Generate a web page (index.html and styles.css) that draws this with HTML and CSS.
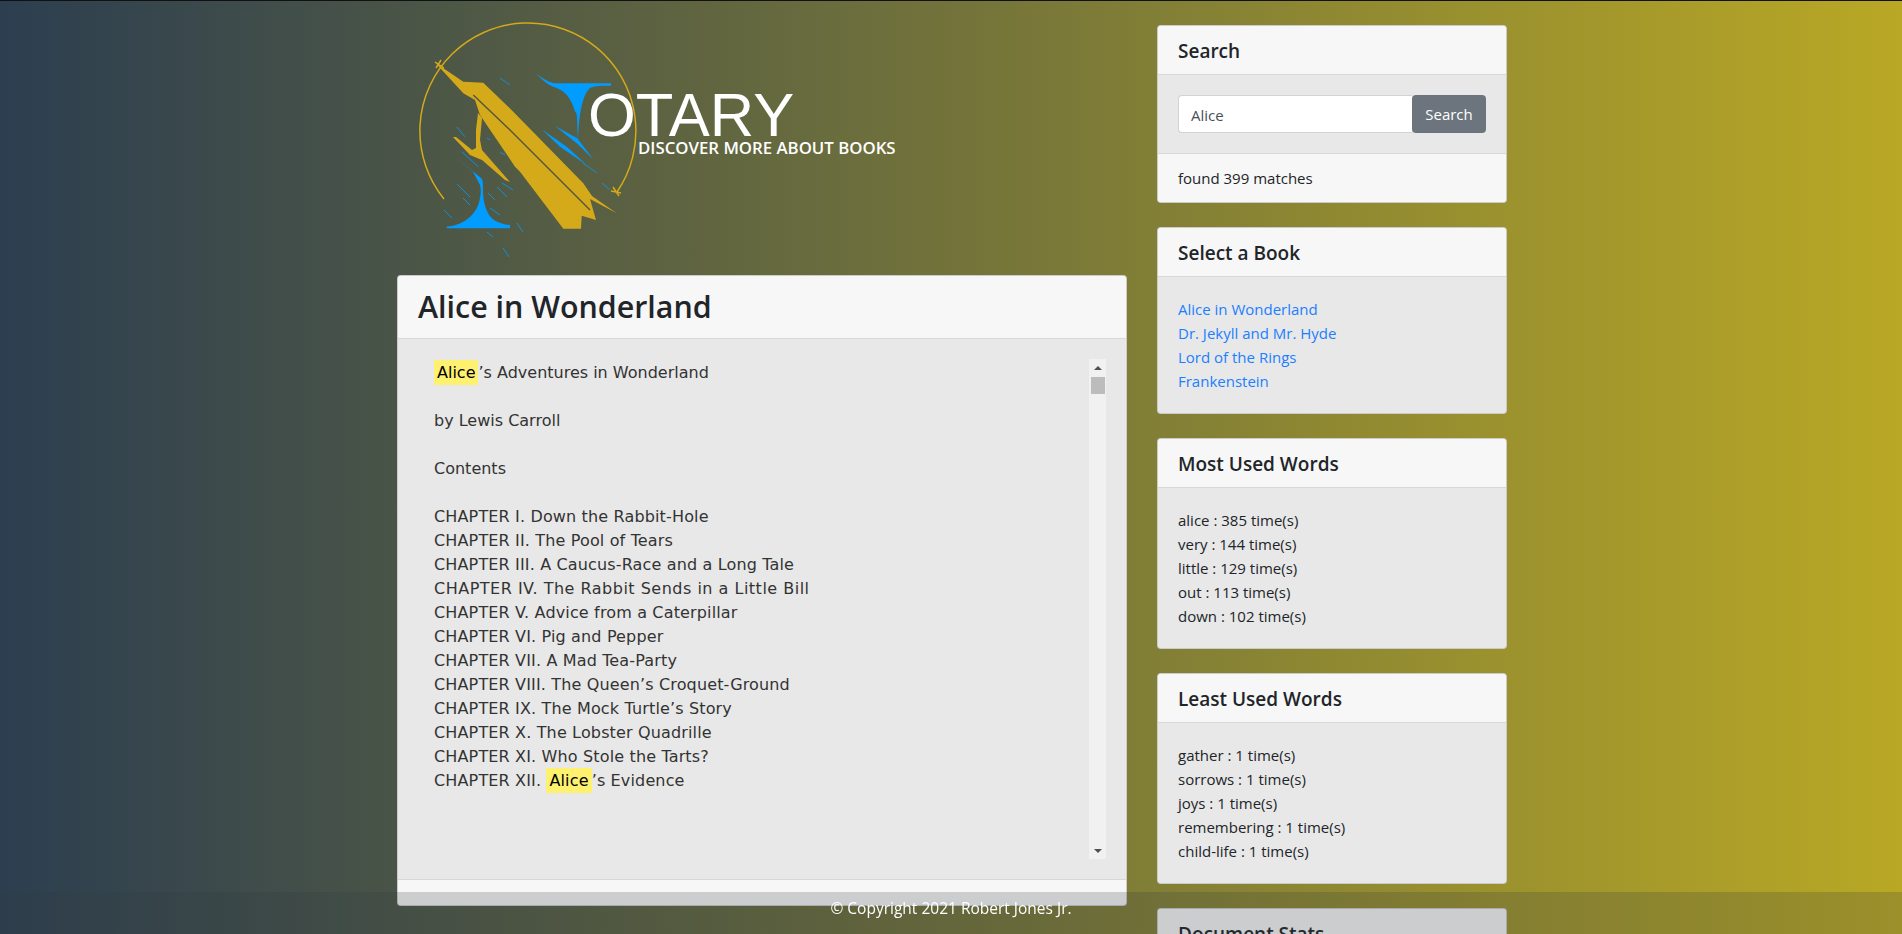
FILE: index.html
```html
<!DOCTYPE html>
<html lang="en">
  <head>
    <meta charset="UTF-8" />
    <meta name="viewport" content="width=device-width, initial-scale=1.0" />
    <title>Notary</title>
    <link rel="stylesheet" href="styles.css">
  </head>
  <body>
    <div class="top-line"></div>
    <div class="container">
      <div class="main-col">
        <header class="brand">
          <svg class="logo" width="240" height="250" viewBox="410 15 240 250">
            <!-- ring, open at the lower left -->
            <path class="ring" d="M444 199 A108 108 0 1 1 617 192" />
            <path class="ring" d="M611 191 L621 193 M613 187 L619 196 M435 62 L444 68 M436 68 L441 60" />
            <!-- the N: long gold diagonal -->
            <path class="gold" d="M435.3 62.7 L463.3 81.7 L483.3 82.7 L513.3 111.7 L583.3 183.3 L592 196 L616.7 213.3 L590 199 L596 220 L581.7 215.7 L581 228.7 L563.3 228.7 L520 171.7 L515 166.7 L480 115 L475 100 L463.3 93.3 Z" />
            <path class="slit" d="M473.3 95 L510 130 L590 210" />
            <path class="gold" d="M478 113 L482 118 L480 140 L482 150 L510 182 L505 180 L482 160 L477 158 L470 155 L453 137 L456 137 L472 150 L476 148 L476 130 Z" />
            <!-- blue serifs of the N -->
            <path class="blue" d="M535 73.3 C542 78 547 81 553.3 83.3 L611 83.3 L611 85.7 C600 85.5 594 86 590 88 C583 94 579 112 578 140 C577 125 578 112 575 111.7 C573 104 570 99 566.7 95 C562 90 558 88 553 86.7 C546 84 541 78 535 73.3 Z" />
            <path class="blue" d="M555 126 L577.3 138.3 L593.3 159.3 L576.7 143.3 Z" />
            <path class="blue" d="M541.7 129.3 L566.7 146.7 L586.7 165 L560 146.7 Z" />
            <path class="blue" d="M446.7 228.3 L446.7 226.5 C456 226 463 223 470 217 C476 211 479 205 480 198 C481 193 481 189 480 185 L473 171.7 L453 155 L481 178 C483 180 483 183 483 190 C483 197 484 205 488 213 C491 219 498 224 510 225 L510 228.3 Z" />
            <!-- specks -->
            <path class="speck" d="M500 78 L510 85 M456.7 127 L465 136.7 M461.7 151.7 L478.3 166.7 M457 184 L470 197 M488 193 L495 200 M497 187 L507 197 M502 183 L513 190 M490 208 L500 215 M444 210 L452 218 M487 232 L493 237 M517 223 L523 232 M503 248 L509 257 M500 152 L505 155 M487 138 L490 140 M583 163 L597 173 M602 183 L610 190 M463 198 L470 205" />
          </svg>
          <div class="brand-text">
            <div class="brand-name">OTARY</div>
            <div class="brand-tag">DISCOVER MORE ABOUT BOOKS</div>
          </div>
        </header>

        <section class="card book">
          <h2 class="card-header book-title">Alice in Wonderland</h2>
          <div class="book-body">
            <pre class="book-text"><mark>Alice</mark>’s Adventures in Wonderland

by Lewis Carroll

Contents

<span class="toc">CHAPTER I. Down the Rabbit-Hole
CHAPTER II. The Pool of Tears
CHAPTER III. A Caucus-Race and a Long Tale
<span class="toc-wide">CHAPTER IV. The Rabbit Sends in a Little Bill</span>
CHAPTER V. Advice from a Caterpillar
CHAPTER VI. Pig and Pepper
CHAPTER VII. A Mad Tea-Party
CHAPTER VIII. The Queen’s Croquet-Ground
CHAPTER IX. The Mock Turtle’s Story
CHAPTER X. The Lobster Quadrille
CHAPTER XI. Who Stole the Tarts?
CHAPTER XII. <mark>Alice</mark>’s Evidence</span></pre>
            <div class="scrollbar">
              <div class="sb-btn sb-up"></div>
              <div class="sb-thumb"></div>
              <div class="sb-btn sb-down"></div>
            </div>
          </div>
          <div class="card-footer book-foot"></div>
        </section>
      </div>

      <aside class="side-col">
        <section class="card">
          <h5 class="card-header">Search</h5>
          <div class="card-body search-body">
            <form class="search-form">
              <input class="search-input" type="text" value="Alice" />
              <button class="search-btn" type="button">Search</button>
            </form>
          </div>
          <div class="card-footer">found 399 matches</div>
        </section>

        <section class="card">
          <h5 class="card-header">Select a Book</h5>
          <div class="card-body">
            <a href="#">Alice in Wonderland</a>
            <a href="#">Dr. Jekyll and Mr. Hyde</a>
            <a href="#">Lord of the Rings</a>
            <a href="#">Frankenstein</a>
          </div>
        </section>

        <section class="card">
          <h5 class="card-header">Most Used Words</h5>
          <div class="card-body">
            <div>alice : 385 time(s)</div>
            <div>very : 144 time(s)</div>
            <div>little : 129 time(s)</div>
            <div>out : 113 time(s)</div>
            <div>down : 102 time(s)</div>
          </div>
        </section>

        <section class="card">
          <h5 class="card-header">Least Used Words</h5>
          <div class="card-body">
            <div>gather : 1 time(s)</div>
            <div>sorrows : 1 time(s)</div>
            <div>joys : 1 time(s)</div>
            <div>remembering : 1 time(s)</div>
            <div>child-life : 1 time(s)</div>
          </div>
        </section>

        <section class="card">
          <h5 class="card-header">Document Stats</h5>
          <div class="card-body">
            <div>Words : 27333</div>
          </div>
        </section>
      </aside>
    </div>

    <footer class="page-foot">© Copyright 2021 Robert Jones Jr.</footer>
  </body>
</html>
```

FILE: styles.css
```css
* {
  box-sizing: border-box;
}

html,
body {
  height: 100%;
}

body {
  margin: 0;
  overflow: hidden;
  font-family: "Open Sans", "Noto Sans", sans-serif;
  font-size: 15px;
  line-height: 24px;
  color: #212529;
  background: linear-gradient(to right, #2c3e50, #b9a825);
}

.top-line {
  height: 1px;
  background: #111;
}

.container {
  width: 1140px;
  margin: 0 auto;
  display: flex;
  gap: 30px;
  padding: 0 14px 0 16px;
}

.main-col {
  width: 730px;
}

.side-col {
  width: 350px;
  padding-top: 24px;
  display: flex;
  flex-direction: column;
  gap: 24px;
}

/* brand */
.brand {
  height: 274px;
  position: relative;
}

.logo {
  position: absolute;
  left: 13px;
  top: 14px;
}

.logo .ring {
  fill: none;
  stroke: #d4a91a;
  stroke-width: 1.5;
}

.logo .gold {
  fill: #d4a91a;
}

.logo .slit {
  fill: none;
  stroke: #55593f;
  stroke-width: 1.5;
}

.logo .blue {
  fill: #009cff;
}

.logo .speck {
  fill: none;
  stroke: #009cff;
  stroke-width: 1;
  opacity: 0.8;
}

.brand-text {
  position: absolute;
  left: 191px;
  top: 90px;
  color: #fff;
}

.brand-name {
  font-family: "Liberation Sans", Arial, sans-serif;
  font-size: 61.5px;
  line-height: 47px;
}

.brand-tag {
  margin-left: 50px;
  font-family: "Open Sans", sans-serif;
  font-size: 16.8px;
  font-weight: 600;
  line-height: 20px;
  white-space: nowrap;
}

/* cards */
.card {
  background: #e8e8e8;
  border: 1px solid rgba(0, 0, 0, 0.125);
  border-radius: 4px;
  overflow: hidden;
}

.card-header {
  margin: 0;
  padding: 13px 20px 11px;
  background: #f7f7f7;
  border-bottom: 1px solid rgba(0, 0, 0, 0.125);
  font-size: 19px;
  font-weight: 600;
  line-height: 24px;
}

.card-body {
  padding: 20px;
}

.card-body a {
  display: block;
  color: #1b7fff;
  text-decoration: none;
}

.card-footer {
  padding: 12px 20px;
  background: #f7f7f7;
  border-top: 1px solid rgba(0, 0, 0, 0.125);
}

/* search */
.search-form {
  display: flex;
}

.search-input {
  flex: 1;
  min-width: 0;
  height: 38px;
  padding: 7px 12px 5px;
  border: 1px solid #ced4da;
  border-right: 0;
  border-radius: 4px 0 0 4px;
  font: inherit;
  color: #495057;
  background: #fff;
}

.search-btn {
  width: 74px;
  height: 38px;
  padding: 6px 0;
  border: 0;
  border-radius: 4px;
  font: inherit;
  color: #fff;
  background: #6c757d;
}

/* book */
.book-title {
  padding: 12px 20px;
  font-size: 30.4px;
  line-height: 38px;
}

.book-body {
  display: flex;
  padding: 20px;
}

.book-text {
  flex: 1;
  height: 500px;
  margin: 0;
  padding: 2px 0 0 16px;
  overflow: hidden;
  font-family: "DejaVu Sans", sans-serif;
  font-size: 16px;
  line-height: 24px;
  color: #333;
}

.book-text mark {
  padding: 3px;
  background: #fff170;
  color: #000;
}

.toc {
  letter-spacing: 0.15px;
}

.toc-wide {
  letter-spacing: 0.5px;
}

.scrollbar {
  flex: 0 0 17px;
  height: 500px;
  display: flex;
  flex-direction: column;
  background: #f1f1f1;
}

.sb-btn {
  height: 17px;
  display: flex;
  align-items: center;
  justify-content: center;
}

.sb-btn::before {
  content: "";
  border-left: 4px solid transparent;
  border-right: 4px solid transparent;
}

.sb-up {
  margin-bottom: 1px;
}

.sb-up::before {
  border-bottom: 4px solid #505050;
}

.sb-down {
  margin-top: auto;
}

.sb-down::before {
  border-top: 4px solid #505050;
}

.sb-thumb {
  width: 14px;
  height: 17px;
  margin-left: 2px;
  background: #bcbcbc;
}

.book-foot {
  height: 26px;
  padding: 0;
}

/* fixed footer */
.page-foot {
  position: fixed;
  left: 0;
  right: 0;
  bottom: 0;
  height: 42px;
  padding-top: 4px;
  font-size: 15.5px;
  text-align: center;
  color: #fff;
  background: rgba(52, 58, 64, 0.22);
}
```
